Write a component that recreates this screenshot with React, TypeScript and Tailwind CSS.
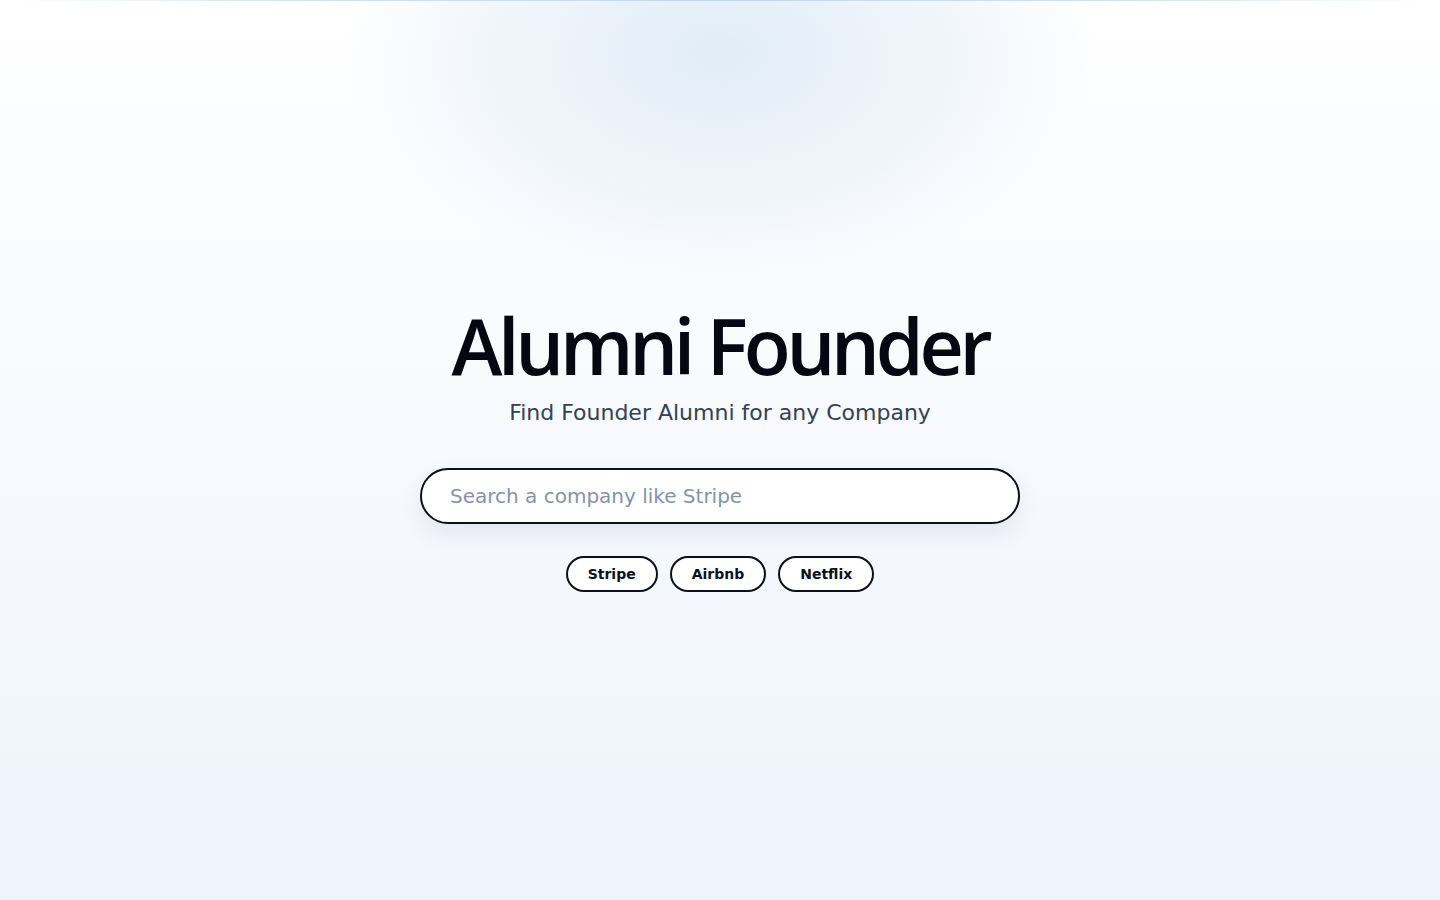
import { useState } from 'react';

const suggestions = ['Stripe', 'Airbnb', 'Netflix'];

export default function App() {
    const [query, setQuery] = useState('');

    return (
        <main className="relative min-h-screen w-full overflow-hidden bg-gradient-to-b from-white to-[#eef3fc] font-['DejaVu_Sans',sans-serif]">
            <div className="pointer-events-none absolute left-0 right-0 top-0 h-px bg-gradient-to-r from-transparent via-[#8ec5e6] to-transparent" />
            <div className="pointer-events-none absolute left-1/2 top-[-180px] h-[460px] w-[740px] -translate-x-1/2 rounded-full bg-[radial-gradient(ellipse_at_center,rgba(212,228,244,0.7)_0%,rgba(226,236,246,0.45)_45%,rgba(255,255,255,0)_72%)]" />

            <div className="relative flex flex-col items-center pt-[301px]">
                <h1 className="font-['Open_Sans',sans-serif] text-[77px] font-semibold leading-[90px] tracking-[-0.055em] text-[#050810]">
                    Alumni Founder
                </h1>
                <p className="mt-[6px] text-[22px] leading-8 text-[#334155]">
                    Find Founder Alumni for any Company
                </p>

                <input
                    type="text"
                    value={query}
                    onChange={(e) => setQuery(e.target.value)}
                    placeholder="Search a company like Stripe"
                    className="mt-[39px] h-[56px] w-[600px] rounded-full border-2 border-[#0b1020] bg-white px-[28px] text-[20px] text-[#0f172a] shadow-[0_10px_25px_rgba(15,23,42,0.08)] outline-none placeholder:text-[#8592ab]"
                />

                <div className="mt-[32px] flex gap-3">
                    {suggestions.map((name) => (
                        <button
                            key={name}
                            onClick={() => setQuery(name)}
                            className="h-[36px] rounded-full border-2 border-[#0b1020] bg-white px-[20px] text-[14px] font-bold text-[#0b1020]"
                        >
                            {name}
                        </button>
                    ))}
                </div>
            </div>
        </main>
    );
}
